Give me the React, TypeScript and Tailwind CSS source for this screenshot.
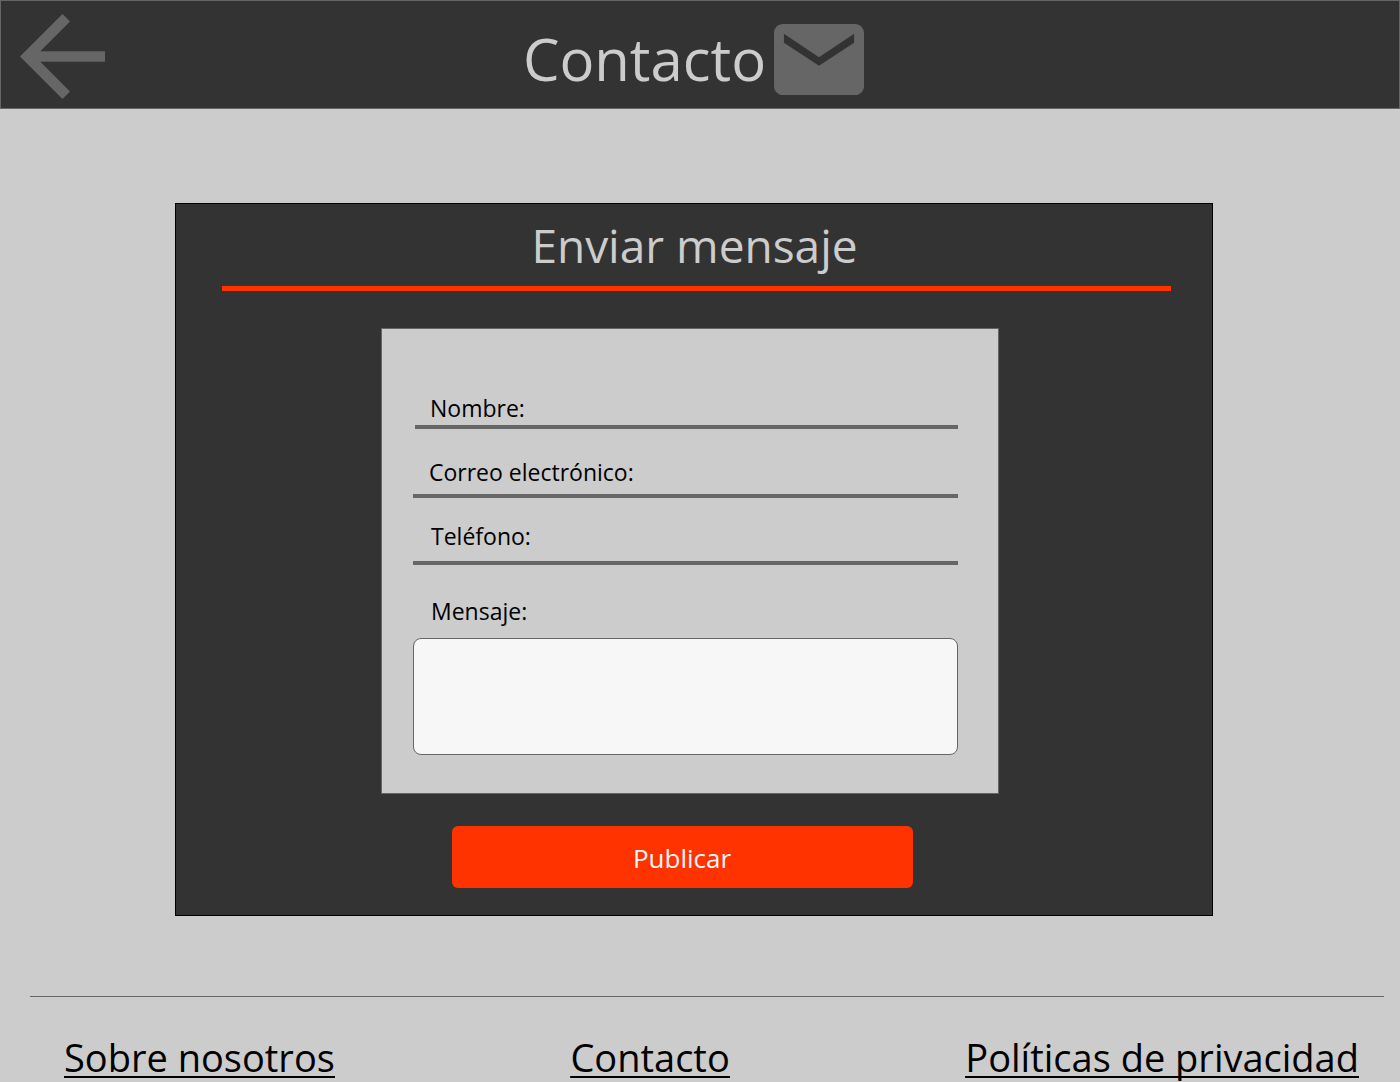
import React from "react";

type FieldProps = {
  id: string;
  label: string;
  type: string;
  className: string;
};

function Field({ id, label, type, className }: FieldProps) {
  return (
    <div className={`flex items-center gap-3 border-b-4 border-[#666666] ${className}`}>
      <label htmlFor={id} className="shrink-0 text-[23px] leading-8 text-black">
        {label}
      </label>
      <input
        id={id}
        name={id}
        type={type}
        className="h-8 min-w-0 flex-1 bg-transparent text-[23px] leading-8 text-black outline-none"
      />
    </div>
  );
}

function ArrowBackIcon() {
  return (
    <svg viewBox="4 4 16 16" className="size-[85px] fill-[#666666]" aria-hidden="true">
      <path d="M20 11H7.83l5.59-5.59L12 4l-8 8 8 8 1.41-1.41L7.83 13H20v-2z" />
    </svg>
  );
}

function MailIcon() {
  return (
    <svg
      viewBox="2 4 20 16"
      preserveAspectRatio="none"
      className="h-[71px] w-[90px] fill-[#666666]"
      aria-hidden="true"
    >
      <path d="M20 4H4c-1.1 0-2 .9-2 2v12c0 1.1.9 2 2 2h16c1.1 0 2-.9 2-2V6c0-1.1-.9-2-2-2zm-.2 4.2L12 13.4 4.2 8.2V6.2L12 11.5l7.8-5.3v2z" />
    </svg>
  );
}

export default function App() {
  return (
    <div className="min-h-screen overflow-x-hidden bg-[#cccccc] font-['Open_Sans','Noto_Sans',sans-serif]">
      <header className="grid grid-cols-[1fr_auto_1fr] border border-[#666666] bg-[#333333] pt-3 pr-8 pb-[9px] pl-[19px]">
        <button type="button" aria-label="Volver" className="justify-self-start pt-px">
          <ArrowBackIcon />
        </button>
        <div className="flex items-center gap-2 pt-[6px]">
          <h1 className="text-[58px] leading-[80px] text-[#cccccc]">Contacto</h1>
          <MailIcon />
        </div>
      </header>

      <main className="pt-[94px] pr-[187px] pl-[175px]">
        <form
          className="flex flex-col items-center border border-black bg-[#333333] pb-[27px]"
          onSubmit={(e: React.FormEvent) => e.preventDefault()}
        >
          <div className="self-stretch pr-[41px] pl-[46px]">
            <h2 className="border-b-[5px] border-[#ff3300] pt-2 pr-1 pb-2 text-center text-[46px] leading-[66px] text-[#cccccc]">
              Enviar mensaje
            </h2>
          </div>

          <div className="mt-[37px] mr-2 flex w-full max-w-[618px] flex-col border border-[#666666] bg-[#cccccc] pt-[63px] pr-10 pb-[38px] pl-[31px]">
            <Field id="nombre" label="Nombre:" type="text" className="ml-0.5 pb-px pl-[15px]" />
            <Field id="correo" label="Correo electrónico:" type="email" className="mt-[27px] pb-[6px] pl-4" />
            <Field id="telefono" label="Teléfono:" type="tel" className="mt-[22px] pb-[9px] pl-[18px]" />
            <label htmlFor="mensaje" className="mt-[30px] pl-[18px] text-[23px] leading-8 text-black">
              Mensaje:
            </label>
            <textarea
              id="mensaje"
              name="mensaje"
              className="mt-[11px] h-[117px] resize-none rounded-lg border border-[#666666] bg-[#f7f7f7] p-3 text-[23px] leading-8 text-black outline-none"
            />
          </div>

          <button
            type="submit"
            className="mt-8 mr-6 h-[62px] w-full max-w-[461px] rounded-md bg-[#ff3300] pt-0.5 text-[26px] leading-8 text-[#f7f7f7]"
          >
            Publicar
          </button>
        </form>
      </main>

      <footer className="mt-20 mr-4 ml-[30px] border-t border-[#666666]">
        <nav className="flex justify-between pt-9 pr-[25px] pl-[34px] text-[38px] leading-[48px] text-black underline decoration-2 underline-offset-4 [text-decoration-skip-ink:none]">
          <a href="#nosotros">Sobre nosotros</a>
          <a href="#contacto">Contacto</a>
          <a href="#privacidad">Políticas de privacidad</a>
        </nav>
      </footer>
    </div>
  );
}
